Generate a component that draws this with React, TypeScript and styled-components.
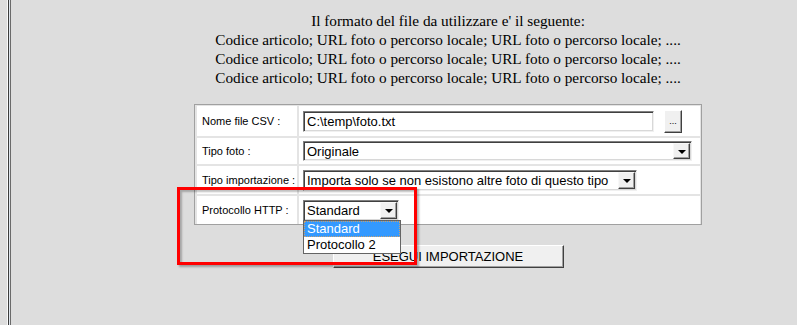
import styled, { createGlobalStyle } from 'styled-components';

const GlobalStyle = createGlobalStyle`
  html, body {
    margin: 0;
    padding: 0;
    background: #dddddd;
    overflow: hidden;
  }
`;

const Page = styled.div`
  position: relative;
  display: flex;
  width: 797px;
  height: 325px;
  overflow: hidden;
  background: #dddddd;
`;

const Frame = styled.div`
  flex: 0 0 11px;
  display: flex;
  padding-left: 7px;
  box-sizing: border-box;
`;

const FrameLine = styled.div<{ $color: string }>`
  width: 1px;
  background: ${(p) => p.$color};
`;

const Content = styled.div`
  flex: 0 0 874px;
  display: flex;
  flex-direction: column;
  align-items: center;
  padding-top: 11px;
`;

const Intro = styled.div`
  font-family: 'Liberation Serif', 'Times New Roman', serif;
  font-size: 15.25px;
  line-height: 19px;
  color: #000;
  text-align: center;
`;

const Form = styled.div`
  margin-top: 17px;
  display: grid;
  grid-template-columns: 100px 401px;
  grid-template-rows: 30px 26px 28px 28px;
  gap: 2px;
  padding: 1px 1px 0 2px;
  border: 1px solid #a0a0a0;
  background: #e4e4e4;
`;

const Label = styled.div`
  display: flex;
  align-items: center;
  padding-left: 5px;
  background: #fff;
  font-family: 'Liberation Sans', Arial, sans-serif;
  font-size: 11px;
  color: #000;
  white-space: nowrap;
`;

const Cell = styled.div`
  position: relative;
  display: flex;
  align-items: center;
  gap: 10px;
  padding-left: 4px;
  background: #fff;
`;

const Sunken = styled.div<{ $width: number; $height?: number }>`
  box-sizing: border-box;
  width: ${(p) => p.$width}px;
  height: ${(p) => p.$height ?? 21}px;
  display: flex;
  align-items: center;
  background: #fff;
  border-top: 1px solid #808080;
  border-left: 1px solid #808080;
  border-right: 1px solid #f0f0f0;
  border-bottom: 1px solid #f0f0f0;
  box-shadow: inset 1px 1px 0 #404040, inset -1px -1px 0 #d8d8d8;
  font-family: 'Liberation Sans', Arial, sans-serif;
  font-size: 13px;
  color: #000;
  white-space: nowrap;
`;

const FieldText = styled.span`
  flex: 1;
  padding-left: 3px;
  overflow: hidden;
`;

const ArrowButton = styled.div`
  box-sizing: border-box;
  width: 17px;
  height: calc(100% - 2px);
  margin-right: 1px;
  display: flex;
  align-items: center;
  justify-content: center;
  background: #f0f0f0;
  border-top: 1px solid #f8f8f8;
  border-left: 1px solid #f8f8f8;
  border-right: 1px solid #404040;
  border-bottom: 1px solid #404040;
  box-shadow: inset -1px -1px 0 #a0a0a0;
  &::after {
    content: '';
    border-left: 4px solid transparent;
    border-right: 4px solid transparent;
    border-top: 4px solid #000;
    margin-top: 1px;
  }
`;

const SmallButton = styled.div`
  box-sizing: border-box;
  width: 18px;
  height: 23px;
  display: flex;
  align-items: flex-end;
  justify-content: center;
  padding-bottom: 6px;
  background: #f0f0f0;
  border-top: 1px solid #fff;
  border-left: 1px solid #fff;
  border-right: 1px solid #404040;
  border-bottom: 1px solid #404040;
  box-shadow: inset -1px -1px 0 #a0a0a0;
  font-family: 'Liberation Sans', Arial, sans-serif;
  font-size: 9px;
  line-height: 9px;
  color: #000;
`;

const DropList = styled.div`
  position: absolute;
  left: 4px;
  top: 24px;
  width: 98px;
  box-sizing: border-box;
  border: 1px solid #646464;
  background: #fff;
  font-family: 'Liberation Sans', Arial, sans-serif;
  font-size: 13px;
  z-index: 2;
`;

const DropItem = styled.div<{ $active?: boolean }>`
  height: 16px;
  line-height: 15px;
  padding-left: 3px;
  box-sizing: border-box;
  background: ${(p) => (p.$active ? '#3399ff' : '#fff')};
  color: ${(p) => (p.$active ? '#fff' : '#000')};
  outline: ${(p) => (p.$active ? '1px dotted #c8a070' : 'none')};
  outline-offset: -1px;
`;

const RunButton = styled.div`
  margin-top: 20px;
  box-sizing: border-box;
  width: 231px;
  height: 23px;
  display: flex;
  align-items: center;
  justify-content: center;
  background: #f0f0f0;
  border-top: 1px solid #fff;
  border-left: 1px solid #fff;
  border-right: 1px solid #404040;
  border-bottom: 1px solid #404040;
  box-shadow: inset -1px -1px 0 #a0a0a0;
  font-family: 'Liberation Sans', Arial, sans-serif;
  font-size: 13px;
  color: #000;
`;

const Highlight = styled.div`
  position: absolute;
  left: 177px;
  top: 187px;
  width: 240px;
  height: 78px;
  box-sizing: border-box;
  border: 3px solid #ff0000;
  box-shadow: 2px 2px 2px rgba(0, 0, 0, 0.3), inset 2px 2px 2px rgba(0, 0, 0, 0.25);
  z-index: 3;
  pointer-events: none;
`;

const rowText = 'Codice articolo; URL foto o percorso locale; URL foto o percorso locale; ....';

export default function App() {
  return (
    <>
      <GlobalStyle />
      <Page>
        <Frame>
          <FrameLine $color="#fafafa" />
          <FrameLine $color="#3c3c3c" />
          <FrameLine $color="#dfe6ee" />
          <FrameLine $color="#6a6a6a" />
        </Frame>
        <Content>
          <Intro>
            Il formato del file da utilizzare e' il seguente:
            <br />
            {rowText}
            <br />
            {rowText}
            <br />
            {rowText}
          </Intro>
          <Form>
            <Label>Nome file CSV :</Label>
            <Cell>
              <Sunken $width={351}>
                <FieldText>C:\temp\foto.txt</FieldText>
              </Sunken>
              <SmallButton>...</SmallButton>
            </Cell>
            <Label>Tipo foto :</Label>
            <Cell>
              <Sunken $width={389} $height={20}>
                <FieldText>Originale</FieldText>
                <ArrowButton />
              </Sunken>
            </Cell>
            <Label>Tipo importazione :</Label>
            <Cell>
              <Sunken $width={334}>
                <FieldText>Importa solo se non esistono altre foto di questo tipo</FieldText>
                <ArrowButton />
              </Sunken>
            </Cell>
            <Label>Protocollo HTTP :</Label>
            <Cell>
              <Sunken $width={96}>
                <FieldText>Standard</FieldText>
                <ArrowButton />
              </Sunken>
              <DropList>
                <DropItem $active>Standard</DropItem>
                <DropItem>Protocollo 2</DropItem>
              </DropList>
            </Cell>
          </Form>
          <RunButton>ESEGUI IMPORTAZIONE</RunButton>
        </Content>
        <Highlight />
      </Page>
    </>
  );
}
